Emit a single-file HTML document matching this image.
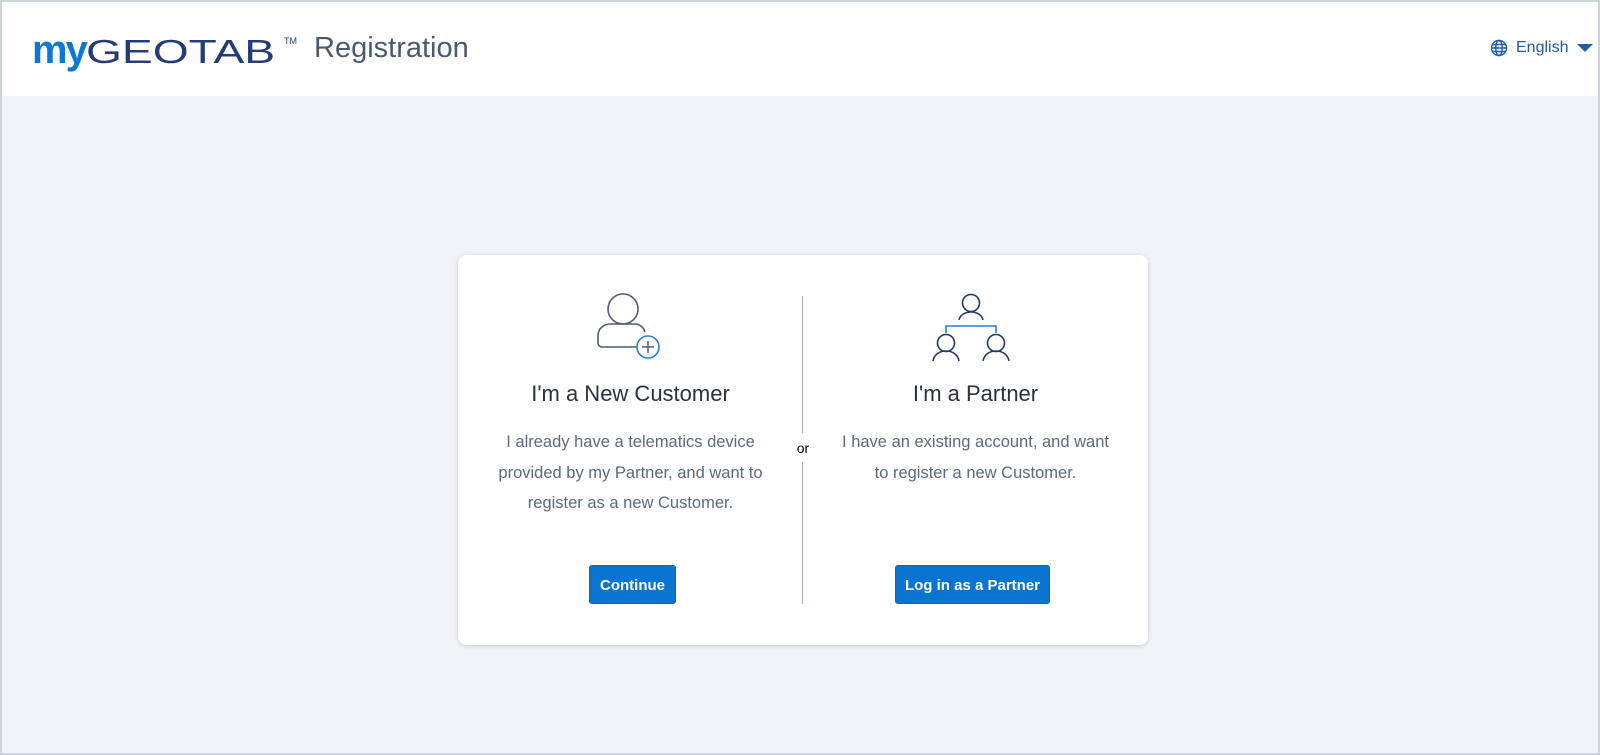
<!DOCTYPE html>
<html><head><meta charset="utf-8"><style>
*{box-sizing:border-box;margin:0;padding:0}
body{width:1600px;height:755px;overflow:hidden;font-family:"Liberation Sans",Arial,sans-serif;background:#fff}
.frame{position:absolute;left:0;top:0;width:1600px;height:755px;border:2px solid #cdd3da;background:#f0f4f7}
.hdr{position:absolute;left:0;top:0;width:1596px;height:94px;background:#fff}
.logo{position:absolute;left:30px;top:26px;font-size:40px;white-space:nowrap}
.logo .my{color:#0a78d4;font-weight:bold;letter-spacing:-2px}
.logo .g{display:inline-block;color:#253c78;font-size:33px;transform:scaleX(1.4);transform-origin:left center}
.logo sup{position:absolute;left:252px;top:8px;font-size:9px;color:#253c78}
.reg{position:absolute;left:312px;top:30px;font-size:29px;color:#4a5a6e}
.lang{position:absolute;left:1488px;top:37px;font-size:16px;color:#1d5ea6;display:flex;align-items:center;gap:8px}
.card{position:absolute;left:456px;top:253px;width:690px;height:390px;background:#fff;border-radius:8px;box-shadow:0 1px 4px rgba(0,0,0,.18)}
.col{position:absolute;top:0;width:345px;text-align:center}
h2{font-weight:normal;font-size:22px;color:#28323e;position:absolute;top:126px;width:100%}
p{position:absolute;top:172px;width:100%;font-size:16.5px;line-height:30.5px;color:#5b6a7c;white-space:nowrap}
.btn{position:absolute;top:310px;height:39px;background:#0a74d0;color:#fff;font-weight:bold;font-size:15px;border-radius:3px;line-height:39px;border:1px solid #0a66b8}
.div{position:absolute;left:344px;width:1px;background:#a3b2c4}
.or{position:absolute;left:336px;top:185px;width:18px;text-align:center;font-size:14px;color:#000}
</style></head><body>
<div class="frame">
<div class="hdr">
<div class="logo"><span class="my">my</span><span class="g">GEOTAB</span><sup>TM</sup></div>
<div class="reg">Registration</div>
<div class="lang"><svg width="18" height="18" viewBox="0 0 18 18" fill="none" stroke="#1d5ea6" stroke-width="1.4"><circle cx="9" cy="9" r="7.5"/><ellipse cx="9" cy="9" rx="3.3" ry="7.5"/><path d="M1.5 9h15M2.5 5.5h13M2.5 12.5h13"/></svg><span>English</span><svg width="18" height="10" viewBox="0 0 18 10"><path d="M1 1h16l-8 8z" fill="#1d5ea6"/></svg></div>
</div>
<div class="card">
<div class="col" style="left:0">
<svg style="position:absolute;left:138px;top:38px" width="68" height="68" viewBox="0 0 68 68" fill="none"><circle cx="27" cy="16" r="15" stroke="#4a5a78" stroke-width="1.6"/><path d="M41 54H6a4 4 0 0 1-4-4v-7c0-8 6-12 13-12h24c5 0 9 4 10 8" stroke="#4a5a78" stroke-width="1.6"/><circle cx="52" cy="54" r="11" fill="#fff" stroke="#2a7fd4" stroke-width="1.6"/><path d="M52 48v12M46 54h12" stroke="#4a5a78" stroke-width="1.5"/></svg>
<h2>I'm a New Customer</h2>
<p>I already have a telematics device<br>provided by my Partner, and want to<br>register as a new Customer.</p>
<div class="btn" style="left:131px;width:87px">Continue</div>
</div>
<div class="div" style="top:41px;height:137px"></div>
<div class="div" style="top:207px;height:142px"></div>
<div class="or">or</div>
<div class="col" style="left:345px">
<svg style="position:absolute;left:125px;top:38px" width="86" height="70" viewBox="0 0 86 70" fill="none" stroke="#223a68" stroke-width="1.6"><circle cx="43" cy="10" r="8.5"/><path d="M31 27c1-5 6-8 12-8s11 3 12 8"/><path d="M18 40v-7h50v7" stroke="#2a7fd4"/><circle cx="18" cy="50" r="8.5"/><path d="M5 68c1-6 6-10 13-10s12 4 13 10"/><circle cx="68" cy="50" r="8.5"/><path d="M55 68c1-6 6-10 13-10s12 4 13 10"/></svg>
<h2>I'm a Partner</h2>
<p>I have an existing account, and want<br>to register a new Customer.</p>
<div class="btn" style="left:92px;width:155px">Log in as a Partner</div>
</div>
</div>
</div>
</body></html>
